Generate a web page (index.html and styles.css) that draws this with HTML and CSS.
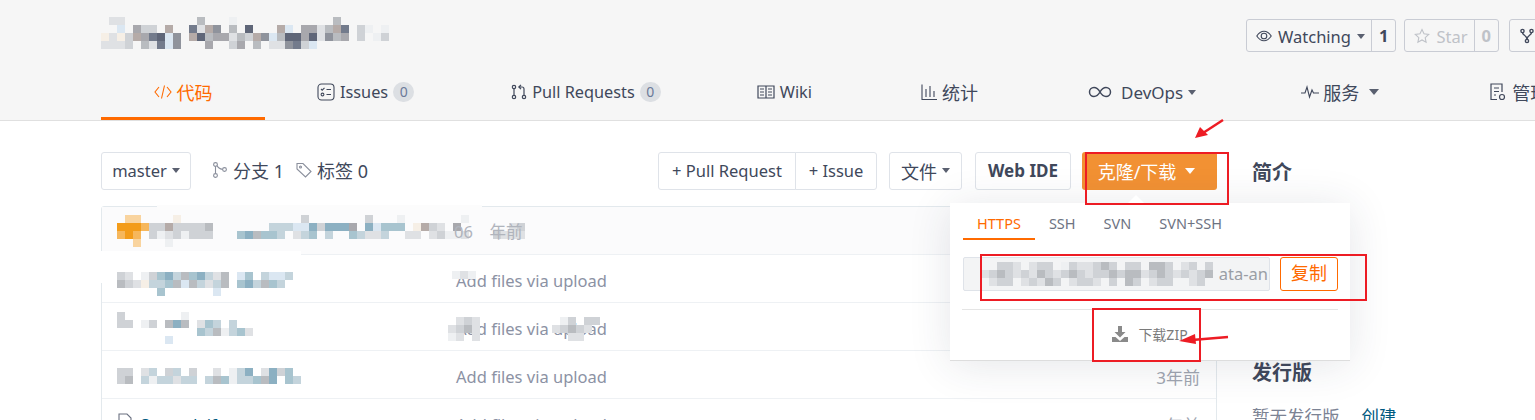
FILE: index.html
```html
<!DOCTYPE html>
<html lang="zh">
<head>
    <meta charset="UTF-8">
    <title>代码</title>
    <link rel="stylesheet" href="styles.css">
</head>
<body>
    <div class="page">
        <header class="repo-head">
            <div class="repo-top">
                <svg class="mosaic" data-x="8" data-rows=".bb.........d...a............d|..j.ecc.n..gbnf.d.h...nj.eebdng.ca.a|ibicneghjf.nhdeebdcnfjdhhehbfde.c.ac|bbbc.dbgjf...e..ce.d.bbfgcj"></svg>
                <div class="repo-actions">
                    <div class="btn-pair">
                        <span class="pair-main">
                            <svg class="icon-16" viewBox="0 0 16 16" fill="none" stroke="currentColor" stroke-width="1.1"><path d="M.8 8C3 4.6 5.3 3.2 8 3.2s5 1.4 7.2 4.8c-2.2 3.4-4.500 4.800-7.200 4.800S3 11.400.8 8z"/><circle cx="8" cy="8" r="2.800"/></svg>
                            Watching <i class="caret"></i>
                        </span>
                        <b class="pair-count">1</b>
                    </div>
                    <div class="btn-pair is-off">
                        <span class="pair-main">
                            <svg class="icon-16" viewBox="0 0 16 16" fill="none" stroke="currentColor" stroke-width="1.1"><path d="M8 1.500l2 4.300 4.700.6-3.500 3.200.9 4.700L8 12l-4.100 2.300.9-4.700L1.300 6.400 6 5.800z"/></svg>
                            Star
                        </span>
                        <b class="pair-count">0</b>
                    </div>
                    <div class="btn-pair">
                        <span class="pair-main">
                            <svg class="icon-16" viewBox="0 0 16 16" fill="none" stroke="currentColor" stroke-width="1.400"><circle cx="3.500" cy="3" r="1.600"/><circle cx="12.500" cy="3" r="1.600"/><circle cx="8" cy="13" r="1.600"/><path d="M3.500 4.600c0 3 4.500 2.400 4.500 6.800M12.500 4.600c0 3-4.500 2.400-4.500 6.800"/></svg>
                        </span>
                    </div>
                </div>
            </div>
            <nav class="repo-nav">
                <a class="tab tab-code is-active">
                    <svg class="icon-code" viewBox="0 0 18 16" fill="none" stroke="currentColor" stroke-width="1.100"><path d="M5 3L1 8l4 5M13 3l4 5-4 5M10.500 1.500l-3 13"/></svg>
                    代码
                </a>
                <a class="tab tab-issues">
                    <svg class="icon-18" viewBox="0 0 18 18" fill="none" stroke="currentColor" stroke-width="1.100"><rect x="1" y="1" width="16" height="16" rx="3.500"/><path d="M4 6l1.200 1.200L7.500 4.800M9.500 6.500h4.500M9.500 11.500h4.500"/><circle cx="5.500" cy="11.500" r="1.400"/></svg>
                    Issues <span class="badge">0</span>
                </a>
                <a class="tab tab-pulls">
                    <svg class="icon-16" viewBox="0 0 16 16" fill="none" stroke="currentColor" stroke-width="1.200"><circle cx="3" cy="3" r="1.700"/><circle cx="3" cy="13" r="1.700"/><circle cx="13" cy="13" r="1.700"/><path d="M3 4.700v6.600M13 11.300V5c0-1.200-.8-2-2-2H8M10 .8L7.800 3 10 5.200"/></svg>
                    Pull Requests <span class="badge">0</span>
                </a>
                <a class="tab tab-wiki">
                    <svg class="icon-18" viewBox="0 0 18 14" fill="none" stroke="currentColor" stroke-width="1.200"><path d="M1 1h16v12H1zM9 1v12M3 4h4M3 7h4M3 10h4M11 4h4M11 7h4M11 10h4"/></svg>
                    Wiki
                </a>
                <a class="tab tab-stats">
                    <svg class="icon-16" viewBox="0 0 16 16" fill="none" stroke="currentColor" stroke-width="1.100"><path d="M1 .5v15h15M5 5v8M9 2v11M13 7v6"/></svg>
                    统计
                </a>
                <a class="tab tab-devops">
                    <svg class="icon-24" viewBox="0 0 24 12" fill="none" stroke="currentColor" stroke-width="1.500"><path d="M12 6C10 2.500 8.500 1.500 6 1.500a4.500 4.500 0 000 9c2.500 0 4-1 6-4.500s3.500-4.500 6-4.500a4.500 4.500 0 010 9c-2.500 0-4-1-6-4.500z"/></svg>
                    <span class="devops-label">DevOps</span> <i class="caret"></i>
                </a>
                <a class="tab tab-service">
                    <svg class="icon-18" viewBox="0 0 18 14" fill="none" stroke="currentColor" stroke-width="1.100"><path d="M0 8h4l2-6 2.500 10L11 5l1.500 3H18"/></svg>
                    服务 <i class="caret caret-wide"></i>
                </a>
                <a class="tab tab-manage">
                    <svg class="icon-18" viewBox="0 0 18 18" fill="none" stroke="currentColor" stroke-width="1.200"><path d="M8 16.500H2V1h11v8M5 5h5M5 8.500h5M5 12h2"/><circle cx="13" cy="14" r="2.500"/></svg>
                    管理
                </a>
            </nav>
        </header>

        <div class="repo-body">
            <main class="repo-main">
                <div class="toolbar">
                    <span class="btn btn-branch">master <i class="caret"></i></span>
                    <span class="meta meta-branch">
                        <svg class="icon-16" viewBox="0 0 16 16" fill="none" stroke="#8a8f9c" stroke-width="1.100"><circle cx="3.500" cy="2.500" r="1.900"/><circle cx="3.500" cy="13.500" r="1.900"/><circle cx="12.500" cy="7.500" r="1.900"/><path d="M3.500 4.400v7.200M5 3.500c1 2.500 3 3.500 5.600 3.900"/></svg>
                        分支 1
                    </span>
                    <span class="meta meta-tag">
                        <svg class="icon-16" viewBox="0 0 16 16" fill="none" stroke="#8a8f9c" stroke-width="1.100"><path d="M1 1.500h6l8 8-5.500 5.500-8.500-8z"/><circle cx="4.500" cy="5" r="1"/></svg>
                        标签 0
                    </span>
                    <div class="toolbar-right">
                        <div class="btn-group">
                            <span class="btn">+ Pull Request</span>
                            <span class="btn">+ Issue</span>
                        </div>
                        <span class="btn btn-file">文件 <i class="caret"></i></span>
                        <span class="btn btn-ide">Web IDE</span>
                        <div class="clone">
                            <span class="btn btn-clone">克隆/下载 <i class="caret caret-wide"></i></span>
                            <div class="clone-menu">
                                <ul class="clone-tabs">
                                    <li class="is-active">HTTPS</li>
                                    <li>SSH</li>
                                    <li>SVN</li>
                                    <li>SVN+SSH</li>
                                </ul>
                                <div class="clone-url">
                                    <div class="url-box">
                                        <svg class="mosaic url-blur" data-x="8" data-rows="..ccb.bcc.acbbcdc.cc.ddc.bc.c|bcdcbcbdcbcdcbccdcddbcdcbcbcd|.bcc.bcbdc.bccb.c.dc.bcc..bc."></svg>
                                        <span>ata-an</span>
                                    </div>
                                    <span class="btn-copy">复制</span>
                                </div>
                                <div class="clone-zip">
                                    <svg class="icon-zip" viewBox="0 0 16 16" fill="#8a8a8a"><path d="M6 0h4v6h3.500L8 11.500 2.500 6H6zM0 11h3.500L8 15l4.500-4H16v5H0z"/></svg>
                                    下载ZIP
                                </div>
                            </div>
                        </div>
                    </div>
                </div>

                <section class="file-box">
                    <div class="file-row commit-row">
                        <svg class="mosaic row-name" data-x="8" data-rows=".pp....i...............c.......c...a.......a|oooqccnccccd.......kkkjjmcmmme.mjlll.incb.e......bc|qoq.cabcaccc...lmdllk.bkl.k..lkbbk..bb.bcaab...cbbb|..p...a"></svg>
                        <span class="commit-age">06　年前</span>
                    </div>
                    <div class="file-row">
                        <svg class="mosaic row-name row-low" data-x="8" data-rows="cb.aclmkdlmkbd.jl.kjjk|dcbikkldjdkbkd.lmkdlk|.....l......j"></svg>
                        <span class="file-msg">Add files via upload</span>
                        <span class="file-age">3年前</span>
                    </div>
                    <div class="file-row">
                        <svg class="mosaic row-name" data-x="8" data-rows="c.......a|cc.ac.dmd.blk.k|..........lkdaklb|......j"></svg>
                        <span class="file-msg">Add files via upload</span>
                        <span class="file-age">3年前</span>
                    </div>
                    <div class="file-row">
                        <svg class="mosaic row-name" data-x="8" data-rows="cc.bk.ck.c..b.akm.bmcl|cd.kakkbkk.kdlakkldm.lk"></svg>
                        <span class="file-msg">Add files via upload</span>
                        <span class="file-age">3年前</span>
                    </div>
                    <div class="file-row">
                        <span class="row-name row-file">
                            <svg class="icon-16" viewBox="0 0 16 16" fill="none" stroke="#6a7080" stroke-width="1.100"><path d="M2 1h8l4 4v10H2zM5 8h6M5 11h6"/></svg>
                            <a>3_pandaif.py</a>
                        </span>
                        <span class="file-msg">Add files via upload</span>
                        <span class="file-age">3年前</span>
                    </div>
                    <i class="smudge smudge-top"></i>
                    <i class="smudge smudge-line"></i>
                    <i class="smudge smudge-left"></i>
                    <svg class="mosaic msg-blur" data-x="8" data-rows=".bcb..........ac.cc|bcdb.........bcdcb|ab.b...........bb"></svg>
                    <svg class="mosaic msg-blur-top" data-x="8" data-rows="aba"></svg>
                </section>
            </main>

            <aside class="repo-side">
                <h3 class="side-title">简介</h3>
                <h3 class="side-title side-release">发行版</h3>
                <p class="side-text">暂无发行版<a>创建</a></p>
            </aside>
        </div>

        <svg class="notes" viewBox="0 0 1535 420" fill="none" stroke="#ed1c24" stroke-width="2">
            <rect x="1086" y="153" width="142" height="51"/>
            <rect x="981" y="255" width="385" height="45"/>
            <rect x="1093" y="309" width="107" height="52"/>
            <path stroke-width="2.500" d="M1223 120l-20 13"/>
            <path stroke-width="2.500" d="M1228 337l-36 3"/>
            <path fill="#ed1c24" stroke="none" d="M1195 138l5-11 8 8z"/>
            <path fill="#ed1c24" stroke="none" d="M1179 341l16-7 1 10z"/>
        </svg>
    </div>
    <script src="mosaic.js"></script>
</body>
</html>
```

FILE: styles.css
```css
* { box-sizing: border-box; }
html, body { margin: 0; height: 420px; overflow: hidden; }
body { font-family: "Noto Sans", "Noto Sans CJK SC", sans-serif; font-size: 16.500px; color: #40485b; background: #fff; }
.page { position: relative; width: 1535px; height: 420px; overflow: hidden; }
i { font-style: normal; }

.icon-16 { width: 16px; height: 16px; flex: none; }
.icon-18 { width: 18px; height: 18px; flex: none; }
.icon-24 { width: 24px; height: 12px; flex: none; }
.icon-code { width: 18px; height: 16px; flex: none; }

.caret { display: inline-block; width: 0; height: 0; border: 4.500px solid transparent; border-top: 5px solid #5a6070; border-bottom: 0; }
.caret-wide { border-width: 6px 5.500px 0; }

.mosaic { display: block; overflow: visible; flex: none; }

/* header */
.repo-head { height: 121px; background: #f6f6f6; border-bottom: 1px solid #e0e0e0; }
.repo-top { position: relative; height: 70px; padding: 17px 0 0 101px; display: flex; }
.repo-actions { position: absolute; top: 19px; left: 1246px; display: flex; gap: 8px; }
.btn-pair { display: flex; height: 33px; border: 1px solid #c9ccd4; border-radius: 3px; line-height: 31px; }
.pair-main { display: flex; align-items: center; gap: 6px; padding: 1px 6px 0 9px; white-space: nowrap; }
.pair-count { padding: 0 7px; border-left: 1px solid #c9ccd4; }
.btn-pair.is-off { color: #bfc2c8; }
.btn-pair.is-off + .btn-pair { margin-left: 2px; }

.repo-nav { display: flex; height: 50px; padding-left: 101px; font-size: 16.300px; white-space: nowrap; }
.tab { display: flex; align-items: center; gap: 5px; height: 50px; padding-bottom: 6px; flex: none; }
.tab.is-active { color: #ff6a00; border-bottom: 3px solid #ff6a00; padding-bottom: 3px; }
.tab-code { width: 164px; justify-content: center; font-size: 18px; }
.tab-issues { margin-left: 52px; }
.tab-pulls { margin-left: 97px; }
.tab-wiki { margin-left: 96px; }
.tab-stats { margin-left: 109px; font-size: 18px; }
.tab-devops { margin-left: 110px; font-size: 17px; }
.devops-label { margin-left: 4px; }
.tab-service { margin-left: 105px; font-size: 18px; gap: 4px; }
.tab-service .caret { margin-left: 6px; }
.tab-manage { margin-left: 110px; font-size: 18px; }
.badge { width: 21px; height: 20px; border-radius: 10px; background: #dcdfe3; color: #6b7a99; font-size: 14px; line-height: 20px; text-align: center; }

/* body */
.repo-body { display: flex; padding-left: 101px; }
.repo-main { width: 1116px; flex: none; }
.repo-side { margin-left: 35px; padding-top: 38px; }

.toolbar { display: flex; align-items: center; height: 38px; margin-top: 31px; }
.toolbar-right { display: flex; margin-left: auto; }
.btn { display: flex; align-items: center; justify-content: center; gap: 5px; height: 38px; padding: 0 12px 1px; border: 1px solid #dfe3e9; border-radius: 3px; background: #fff; white-space: nowrap; }
.btn-branch { width: 90px; }
.meta { display: flex; align-items: center; gap: 5px; padding-bottom: 2px; font-size: 18px; white-space: nowrap; }
.meta-branch { margin-left: 21px; }
.meta-tag { margin-left: 12px; }
.btn-group { display: flex; }
.btn-group .btn:first-child { width: 138px; border-radius: 3px 0 0 3px; }
.btn-group .btn:last-child { width: 82px; margin-left: -1px; border-radius: 0 3px 3px 0; }
.btn-file { width: 73px; margin-left: 12px; font-size: 18px; }
.btn-ide { width: 96px; margin-left: 13px; font-size: 17px; font-weight: 700; }
.clone { position: relative; margin-left: 11px; }
.btn-clone { width: 135px; gap: 9px; padding-right: 18px; border: 0; background: #f29133; color: #fff; font-size: 18px; }
.btn-clone .caret { border-top-color: #fff; }

.clone-menu { position: absolute; z-index: 2; top: 51px; right: -133px; width: 400px; height: 158px; padding: 0 12px; background: #fff; border-bottom: 1px solid #ddd; box-shadow: 0 4px 40px rgba(40, 50, 70, .12); }
.clone-menu::before { content: ""; position: absolute; top: -8px; left: 178px; width: 0; height: 0; border: 8px solid transparent; border-top: 0; border-bottom-color: #fff; }
.clone-tabs { display: flex; height: 37px; margin: 0 1px; padding: 0; list-style: none; font-size: 14.500px; color: #6d7382; }
.clone-tabs li { padding: 0 14px; line-height: 40px; }
.clone-tabs .is-active { color: #ff6a00; border-bottom: 2px solid #ff6a00; }
.clone-url { display: flex; gap: 10px; margin: 17px 0 0 1px; }
.url-box { position: relative; width: 307px; height: 34px; border: 1px solid #dfe3e9; border-radius: 2px; background: #f3f4f5; padding-right: 1px; line-height: 32px; text-align: right; color: #9a9ea5; font-size: 16.500px; overflow: hidden; }
.url-blur { position: absolute; left: 17px; top: 4px; }
.btn-copy { width: 58px; height: 34px; border: 1px solid #ff6a00; border-radius: 3px; color: #ff6a00; font-size: 18px; line-height: 30px; text-align: center; }
.clone-zip { display: flex; align-items: center; justify-content: center; gap: 10px; height: 52px; margin-top: 18px; padding-bottom: 3px; border-top: 1px solid #e5e5e5; color: #7a7a7a; font-size: 14px; }
.icon-zip { width: 16px; height: 16px; }

.file-box { position: relative; margin-top: 16px; border: 1px solid #e3e9ed; border-radius: 3px 3px 0 0; }
.file-row { display: flex; align-items: center; height: 48px; padding: 3px 15px 0; border-bottom: 1px solid #eef1f4; white-space: nowrap; }
.commit-row { padding-top: 0; background: #fbfbfc; }
.row-name { width: 339px; }
.row-low { margin-top: 8px; }
.row-file { display: flex; align-items: center; gap: 8px; }
.row-file .icon-16 { margin-top: -6px; }
.row-file a { color: #005980; }
.commit-age { position: absolute; left: 352px; color: #b0b4bc; }
.file-msg { color: #8c92a4; }
.file-age { margin-left: auto; margin-right: 1px; color: #a0a5b0; font-size: 17px; }
.msg-blur { position: absolute; left: 346px; top: 110px; }
.msg-blur-top { position: absolute; left: 350px; top: 64px; }

/* the blur in the screenshot also wipes some of the box lines */
.smudge { position: absolute; background: #fff; }
.smudge-top { left: 55px; top: -2px; width: 325px; height: 5px; background: #fcfcfc; }
.smudge-line { left: -1px; top: 44px; width: 200px; height: 8px; }
.smudge-left { left: -2px; top: 44px; width: 4px; height: 32px; }

.side-title { margin: 0; font-size: 20px; font-weight: 700; line-height: 28px; }
.side-release { margin-top: 172px; }
.side-text { margin: 16px 0 0; color: #7c8394; font-size: 17.500px; white-space: nowrap; }
.side-text a { margin-left: 22px; color: #005980; }

/* red markup drawn on the screenshot */
.notes { position: absolute; z-index: 3; left: 0; top: 0; width: 1535px; height: 420px; pointer-events: none; }
```

FILE: mosaic.js
```js
// fills the blurred patches: each letter in data-rows is one 8px block
const shades = {
    a: '#eef0f2', b: '#dfe1e4', c: '#cfd2d6', d: '#b9bcc0', e: '#a8a8ad', f: '#8f939c', g: '#737b8c', h: '#5f6678',
    i: '#f6efe6', j: '#dbe7f2', k: '#c4d4dc', l: '#a8c4cf', m: '#8cb0c2', n: '#b5aba8',
    o: '#f39c1a', p: '#f9d49f', q: '#f6b75c'
};

document.querySelectorAll('.mosaic').forEach(function(svg) {
    const size = Number(svg.dataset.x);
    const rows = svg.dataset.rows.split('|');
    const width = Math.max(...rows.map(r => r.length));
    svg.setAttribute('width', width * size);
    svg.setAttribute('height', rows.length * size);
    rows.forEach(function(row, y) {
        [...row].forEach(function(ch, x) {
            if (!shades[ch]) return;
            const rect = document.createElementNS('http://www.w3.org/2000/svg', 'rect');
            rect.setAttribute('x', x * size);
            rect.setAttribute('y', y * size);
            rect.setAttribute('width', size);
            rect.setAttribute('height', size);
            rect.setAttribute('fill', shades[ch]);
            svg.appendChild(rect);
        });
    });
});
```
